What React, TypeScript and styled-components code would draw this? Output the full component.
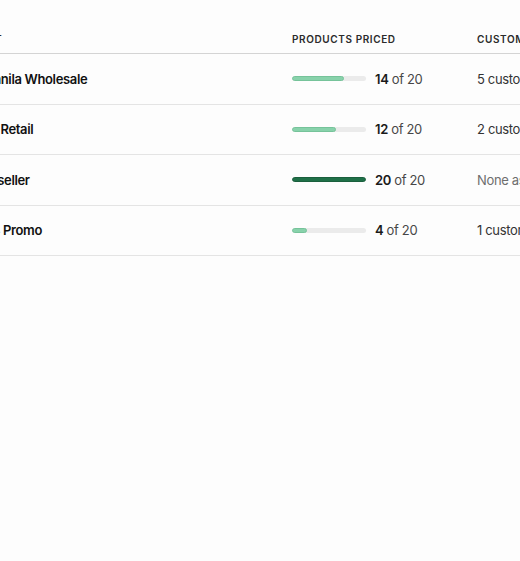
import React from "react";
import styled, { createGlobalStyle } from "styled-components";

const GlobalStyle = createGlobalStyle`
  html, body {
    margin: 0;
    padding: 0;
    background: #fdfdfd;
    overflow: hidden;
  }
  body {
    font-family: Inter, "Noto Sans", "Liberation Sans", sans-serif;
    color: #1a1a1a;
    -webkit-font-smoothing: antialiased;
  }
`;

const Viewport = styled.div`
  width: 520px;
  height: 561px;
  overflow: hidden;
`;

const Canvas = styled.div`
  margin-left: -80px;
  margin-top: -16px;
  width: 960px;
`;

const Intro = styled.p`
  margin: 0 0 24px;
  padding-left: 62px;
  font-size: 13px;
  line-height: 16px;
  letter-spacing: -0.2px;
  color: #888;
  white-space: nowrap;
`;

const Table = styled.div`
  display: grid;
  grid-template-columns: 372px 185px 1fr;
`;

const HeaderCell = styled.div<{ $first?: boolean }>`
  height: 30px;
  box-sizing: border-box;
  display: flex;
  align-items: center;
  padding-left: ${(p) => (p.$first ? "23px" : "0")};
  border-bottom: 1px solid #d4d4d4;
  font-size: 10px;
  font-weight: 600;
  letter-spacing: 0.6px;
  text-transform: uppercase;
  color: #2b2b2b;
  white-space: nowrap;
`;

const Cell = styled.div<{ $first?: boolean }>`
  height: 50.5px;
  box-sizing: border-box;
  display: flex;
  align-items: center;
  padding-left: ${(p) => (p.$first ? "62px" : "0")};
  border-bottom: 1px solid #e4e4e4;
  font-size: 13px;
  letter-spacing: -0.35px;
  white-space: nowrap;
`;

const Name = styled.span`
  font-weight: 600;
  color: #111;
`;

const Priced = styled.div`
  display: flex;
  align-items: center;
  gap: 9px;
`;

const Track = styled.div`
  width: 74px;
  height: 5px;
  border-radius: 3px;
  background: #ebebeb;
  overflow: hidden;
`;

const Fill = styled.div<{ $full: boolean }>`
  height: 100%;
  border-radius: 3px;
  box-sizing: border-box;
  background: ${(p) => (p.$full ? "#1f7048" : "#88d2ab")};
  border: 1px solid ${(p) => (p.$full ? "#1a5f3d" : "#76c39a")};
`;

const Count = styled.span`
  color: #474747;
  b {
    font-weight: 600;
    color: #1a1a1a;
  }
`;

const Customers = styled.span<{ $muted?: boolean }>`
  color: ${(p) => (p.$muted ? "#6e6e6e" : "#333")};
`;

type Row = { name: string; priced: number; customers: string; muted?: boolean };

const rows: Row[] = [
  { name: "Manila Wholesale", priced: 14, customers: "5 customers" },
  { name: "FB Retail", priced: 12, customers: "2 customers" },
  { name: "Reseller", priced: 20, customers: "None assigned", muted: true },
  { name: "Q4 Promo", priced: 4, customers: "1 customer" },
];

const TOTAL = 20;

export default function App() {
  return (
    <Viewport>
      <GlobalStyle />
      <Canvas>
        <Intro>Set up lists that override the retail price of selected items and customers.</Intro>
        <Table>
          <HeaderCell $first>Price list</HeaderCell>
          <HeaderCell>Products priced</HeaderCell>
          <HeaderCell>Customers</HeaderCell>
          {rows.map((r) => (
            <React.Fragment key={r.name}>
              <Cell $first>
                <Name>{r.name}</Name>
              </Cell>
              <Cell>
                <Priced>
                  <Track>
                    <Fill
                      $full={r.priced === TOTAL}
                      style={{ width: `${(r.priced / TOTAL) * 100}%` }}
                    />
                  </Track>
                  <Count>
                    <b>{r.priced}</b> of {TOTAL}
                  </Count>
                </Priced>
              </Cell>
              <Cell>
                <Customers $muted={r.muted}>{r.customers}</Customers>
              </Cell>
            </React.Fragment>
          ))}
        </Table>
      </Canvas>
    </Viewport>
  );
}
